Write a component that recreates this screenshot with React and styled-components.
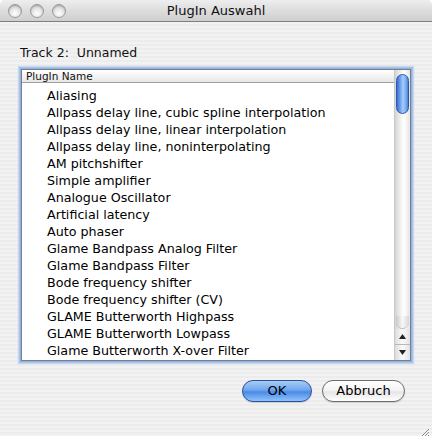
import styled, { createGlobalStyle } from "styled-components";

const GlobalStyle = createGlobalStyle`
  html, body {
    margin: 0;
    padding: 0;
  }
  body {
    font-family: "Lucida Grande", "DejaVu Sans", sans-serif;
    background: #ffffff;
  }
`;

const plugins = [
  "Aliasing",
  "Allpass delay line, cubic spline interpolation",
  "Allpass delay line, linear interpolation",
  "Allpass delay line, noninterpolating",
  "AM pitchshifter",
  "Simple amplifier",
  "Analogue Oscillator",
  "Artificial latency",
  "Auto phaser",
  "Glame Bandpass Analog Filter",
  "Glame Bandpass Filter",
  "Bode frequency shifter",
  "Bode frequency shifter (CV)",
  "GLAME Butterworth Highpass",
  "GLAME Butterworth Lowpass",
  "Glame Butterworth X-over Filter",
];

export default function App() {
  return (
    <>
      <GlobalStyle />
      <Window>
        <TitleBar>
          <Lights>
            <Light />
            <Light />
            <Light />
          </Lights>
          <Title>PlugIn Auswahl</Title>
        </TitleBar>
        <Content>
          <TrackLabel>Track 2:&nbsp; Unnamed</TrackLabel>
          <ListFrame>
            <ListMain>
              <Header>PlugIn Name</Header>
              <Rows>
                {plugins.map((p) => (
                  <Row key={p}>{p}</Row>
                ))}
              </Rows>
            </ListMain>
            <Scrollbar>
              <Track>
                <Thumb />
              </Track>
              <TrackEnd />
              <ArrowBtn>
                <svg width="7" height="5" viewBox="0 0 7 5">
                  <path d="M3.5 0 L7 5 L0 5 Z" fill="#222" />
                </svg>
              </ArrowBtn>
              <ArrowBtn>
                <svg width="7" height="5" viewBox="0 0 7 5">
                  <path d="M0 0 L7 0 L3.5 5 Z" fill="#222" />
                </svg>
              </ArrowBtn>
            </Scrollbar>
          </ListFrame>
          <Buttons>
            <Button $primary $w={70}>OK</Button>
            <Button $w={83}>Abbruch</Button>
          </Buttons>
        </Content>
        <Grip>
          <svg width="11" height="11" viewBox="0 0 11 11">
            <path d="M10 2 L2 10 M10 5 L5 10 M10 8 L8 10" stroke="#888" strokeWidth="1" />
            <path d="M10.8 2.8 L2.8 10.8 M10.8 5.8 L5.8 10.8" stroke="#fff" strokeWidth="0.8" />
          </svg>
        </Grip>
      </Window>
    </>
  );
}

const Window = styled.div`
  position: relative;
  width: 432px;
  height: 436px;
  display: flex;
  flex-direction: column;
  border-radius: 5px 5px 0 0;
  overflow: hidden;
  background: repeating-linear-gradient(
    to bottom,
    #ececec 0px,
    #ececec 2px,
    #f2f2f2 2px,
    #f2f2f2 4px
  );
`;

const TitleBar = styled.div`
  height: 21px;
  flex-shrink: 0;
  display: flex;
  align-items: center;
  position: relative;
  background: linear-gradient(to bottom, #eeeeee 0%, #dddddd 50%, #cfcfcf 100%);
  border-bottom: 1px solid #7e7e7e;
`;

const Lights = styled.div`
  display: flex;
  gap: 8px;
  padding-left: 8px;
  padding-top: 1px;
`;

const Light = styled.div`
  width: 12px;
  height: 12px;
  border-radius: 50%;
  border: 1px solid #9a9a9a;
  background: radial-gradient(
    circle at 50% 70%,
    #ffffff 0%,
    #e6e6e6 45%,
    #bcbcbc 100%
  );
  box-shadow: inset 0 1px 1px rgba(0, 0, 0, 0.2);
`;

const Title = styled.div`
  position: absolute;
  left: 0;
  right: 0;
  text-align: center;
  font-size: 13px;
  color: #111;
  pointer-events: none;
`;

const Content = styled.div`
  display: flex;
  flex-direction: column;
  padding: 22px 21px 0 21px;
`;

const TrackLabel = styled.div`
  font-size: 12.5px;
  color: #111;
  height: 17px;
  line-height: 17px;
  margin-left: -1px;
`;

const ListFrame = styled.div`
  margin-top: 8px;
  width: 390px;
  height: 292px;
  display: flex;
  box-sizing: border-box;
  border: 1px solid #7f7f7f;
  background: #fff;
  box-shadow: 0 0 0 1px #8db2e3, 0 0 0 2px #a8c5ec, 0 0 1px 3px #c5d8f1;
`;

const ListMain = styled.div`
  flex: 1;
  display: flex;
  flex-direction: column;
  overflow: hidden;
`;

const Header = styled.div`
  height: 12px;
  line-height: 13px;
  padding-left: 4px;
  font-size: 10.5px;
  color: #111;
  background: linear-gradient(to bottom, #ffffff 0%, #f3f3f3 50%, #e8e8e8 100%);
  border-bottom: 1px solid #a0a0a0;
`;

const Rows = styled.div`
  display: flex;
  flex-direction: column;
  padding-top: 4px;
`;

const Row = styled.div`
  height: 17px;
  line-height: 18px;
  padding-left: 25px;
  font-size: 12.7px;
  color: #000;
  white-space: nowrap;
`;

const Scrollbar = styled.div`
  width: 15px;
  display: flex;
  flex-direction: column;
  background: linear-gradient(to right, #d4d4d4 0%, #f4f4f4 40%, #ffffff 60%, #e4e4e4 100%);
  border-left: 1px solid #c8c8c8;
`;

const Track = styled.div`
  flex: 1;
  padding: 4px 1px 0 1px;
`;

const Thumb = styled.div`
  height: 40px;
  border-radius: 7px;
  border: 1px solid #2c58a6;
  box-sizing: border-box;
  background: linear-gradient(
    to right,
    #3a6cd4 0%,
    #6fa2ee 30%,
    #a6cdf8 55%,
    #79aef2 80%,
    #4a80dc 100%
  );
`;

const TrackEnd = styled.div`
  height: 12px;
  border-radius: 0 0 7px 7px;
  background: linear-gradient(to right, #c8c8c8 0%, #f8f8f8 50%, #d8d8d8 100%);
  border-bottom: 1px solid #b8b8b8;
  margin: 0 1px;
`;

const ArrowBtn = styled.div`
  height: 15px;
  display: flex;
  align-items: center;
  justify-content: center;
  border-bottom: 1px solid #b8b8b8;
  background: linear-gradient(to right, #dcdcdc 0%, #fafafa 50%, #e2e2e2 100%);

  &:last-child {
    border-bottom: none;
  }
`;

const Buttons = styled.div`
  display: flex;
  justify-content: flex-end;
  gap: 10px;
  margin-top: 19px;
  padding-right: 6px;
`;

const Button = styled.div`
  width: ${(p) => p.$w}px;
  height: 22px;
  line-height: 20px;
  box-sizing: border-box;
  text-align: center;
  font-size: 13px;
  color: #000;
  border-radius: 11px;
  border: 1px solid ${(p) => (p.$primary ? "#2a4f9a" : "#6c6c6c")};
  background: ${(p) =>
    p.$primary
      ? "linear-gradient(to bottom, #a8cdf6 0%, #6fa6ec 45%, #4a8ae6 55%, #8fc4fb 100%)"
      : "linear-gradient(to bottom, #ffffff 0%, #f4f4f4 45%, #e6e6e6 55%, #ffffff 100%)"};
  box-shadow: 0 1px 1px rgba(0, 0, 0, 0.15);
`;

const Grip = styled.div`
  position: absolute;
  right: 2px;
  bottom: 2px;
  width: 11px;
  height: 11px;
`;
